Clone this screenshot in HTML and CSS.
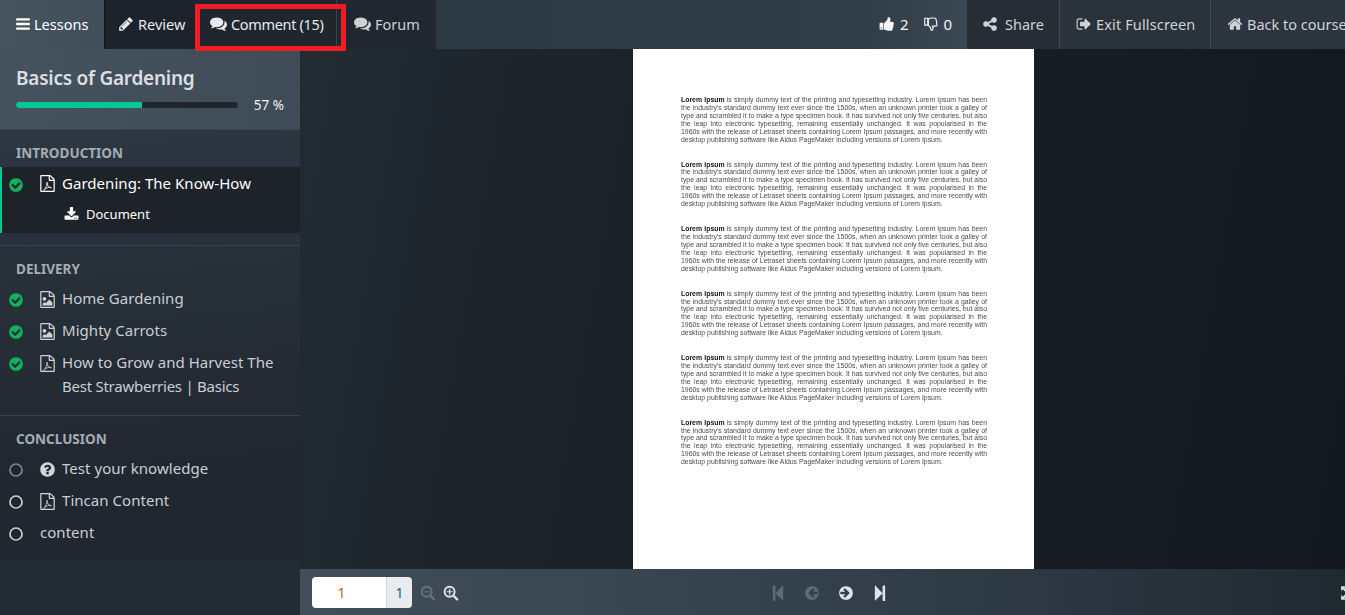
FILE: index.html
```html
<!DOCTYPE html>
<html lang="en">
<head>
<meta charset="utf-8">
<title>Basics of Gardening</title>
<link rel="stylesheet" href="styles.css">
</head>
<body>
<svg class="sprite" xmlns="http://www.w3.org/2000/svg">
  <symbol id="i-bars" viewBox="0 0 1792 1792"><path d="M1664 1344v128q0 26-19 45t-45 19h-1408q-26 0-45-19t-19-45v-128q0-26 19-45t45-19h1408q26 0 45 19t19 45zm0-512v128q0 26-19 45t-45 19h-1408q-26 0-45-19t-19-45v-128q0-26 19-45t45-19h1408q26 0 45 19t19 45zm0-512v128q0 26-19 45t-45 19h-1408q-26 0-45-19t-19-45v-128q0-26 19-45t45-19h1408q26 0 45 19t19 45z"/></symbol>
  <symbol id="i-pencil" viewBox="0 0 1792 1792"><path d="M491 1536l91-91-235-235-91 91v107h128v128h107zm523-928q0-22-22-22-10 0-17 7l-542 542q-7 7-7 17 0 22 22 22 10 0 17-7l542-542q7-7 7-17zm-54-192l416 416-832 832h-416v-416zm683 96q0 53-37 90l-166 166-416-416 166-165q36-38 90-38 53 0 91 38l235 234q37 39 37 91z"/></symbol>
  <symbol id="i-comments" viewBox="0 0 1792 1792"><path d="M1408 768q0 139-94 257t-256.500 186.500-353.500 68.500q-86 0-176-16-124 88-278 128-36 9-86 16h-3q-11 0-20.500-8t-11.500-21q-1-3-1-6.500t.5-6.500 2-6l2.500-5 3.500-5.500 4-5 4.500-5 4-4.500q5-6 23-25t26-29.500 22.500-29 25-38.500 20.500-44q-124-72-195-177t-71-224q0-139 94-257t256.500-186.500 353.500-68.500 353.500 68.500 256.500 186.500 94 257zm384 256q0 120-71 224.500t-195 176.500q10 24 20.500 44t25 38.500 22.500 29 26 29.500 23 25q1 1 4 4.500t4.500 5 4 5 3.500 5.500l2.500 5 2 6 .5 6.500-1 6.500q-3 14-13 22t-22 7q-50-7-86-16-154-40-278-128-90 16-176 16-271 0-472-132 58 4 88 4 161 0 309-45t264-129q125-92 192-212t67-254q0-77-23-152 129 71 204 178t75 230z"/></symbol>
  <symbol id="i-thumb-up" viewBox="0 0 1792 1792"><path d="M320 1344q0-26-19-45t-45-19q-27 0-45.500 19t-18.500 45q0 27 18.500 45.500t45.500 18.500q26 0 45-18.500t19-45.500zm160-512v640q0 26-19 45t-45 19h-288q-26 0-45-19t-19-45v-640q0-26 19-45t45-19h288q26 0 45 19t19 45zm1184 0q0 86-55 149 15 44 15 76 3 76-43 137 17 56 0 117-15 57-54 94 9 112-49 181-64 76-197 78h-129q-66 0-144-15.500t-121.500-29-120.500-39.500q-123-43-158-44-26-1-45-19.500t-19-44.500v-641q0-25 18-43.500t43-20.500q24-2 76-59t101-121q68-87 101-120 18-18 31-48t17.500-48.500 13.500-60.500q7-39 12.500-61t19.500-52 34-50q19-19 45-19 46 0 82.500 10.500t60 26 40 40.500 24 45 12 50 5 45 .5 39q0 38-9.500 76t-19 60-27.500 56q-3 6-10 18t-11 22-8 24h277q78 0 135 57t57 135z"/></symbol>
  <symbol id="i-thumb-down" viewBox="0 0 1792 1792"><g transform="matrix(1 0 0 -1 0 1792)" fill="none" stroke="currentColor" stroke-width="128" stroke-linejoin="round"><path d="M600 832v640q70 10 200 60 110 40 230 40h220q120 0 170-60 45-55 40-150 40-45 50-100 10-50-5-100 35-55 30-125-2-40-15-70 50-60 50-135 0-80-55-130t-125-50h-340q25-60 50-115 25-70 25-130 0-100-50-155-40-40-120-40-30 0-50 30-15 25-25 85-15 90-60 170-50 75-130 165-50 50-90 70z"/><path d="M190 770h340v770h-340z"/></g></symbol>
  <symbol id="i-share" viewBox="0 0 1792 1792"><path d="M1344 1024q133 0 226.500 93.500t93.500 226.500-93.500 226.500-226.500 93.500-226.500-93.500-93.500-226.500q0-12 2-34l-360-180q-92 86-218 86-133 0-226.500-93.500t-93.500-226.500 93.500-226.500 226.500-93.500q126 0 218 86l360-180q-2-22-2-34 0-133 93.500-226.500t226.500-93.500 226.500 93.500 93.500 226.500-93.500 226.500-226.500 93.500q-126 0-218-86l-360 180q2 22 2 34t-2 34l360 180q92-86 218-86z"/></symbol>
  <symbol id="i-exit" viewBox="0 0 1792 1792"><path d="M704 1440q0 4 1 20t.5 26.500-3 23.500-10 19.500-20.500 6.500h-320q-119 0-203.500-84.500t-84.500-203.500v-704q0-119 84.500-203.500t203.500-84.500h320q13 0 22.500 9.500t9.500 22.500q0 4 1 20t.5 26.500-3 23.500-10 19.500-20.500 6.500h-320q-66 0-113 47t-47 113v704q0 66 47 113t113 47h312l11.500 1 11.500 3 8 5.500 7 9 2 13.500zm928-544q0 26-19 45l-544 544q-19 19-45 19t-45-19-19-45v-288h-448q-26 0-45-19t-19-45v-384q0-26 19-45t45-19h448v-288q0-26 19-45t45-19 45 19l544 544q19 19 19 45z"/></symbol>
  <symbol id="i-home" viewBox="0 0 1792 1792"><path d="M1472 992v480q0 26-19 45t-45 19h-384v-384h-256v384h-384q-26 0-45-19t-19-45v-480q0-1 .5-3t.5-3l575-474 575 474q1 2 1 6zm223-69l-62 74q-8 9-21 11h-3q-13 0-21-7l-692-577-692 577q-12 8-24 7-13-2-21-11l-62-74q-8-10-7-23.500t11-21.500l719-599q32-26 76-26t76 26l244 204v-195q0-14 9-23t23-9h192q14 0 23 9t9 23v408l219 182q10 8 11 21.500t-7 23.500z"/></symbol>
  <symbol id="i-check" viewBox="0 0 1792 1792"><path d="M1412 734q0-28-18-46l-91-90q-19-19-45-19t-45 19l-408 407-226-226q-19-19-45-19t-45 19l-91 90q-18 18-18 46 0 27 18 45l362 362q19 19 45 19 27 0 46-19l543-543q18-18 18-45zm252 162q0 209-103 385.500t-279.500 279.500-385.500 103-385.500-103-279.500-279.500-103-385.500 103-385.500 279.500-279.500 385.500-103 385.500 103 279.500 279.500 103 385.500z"/></symbol>
  <symbol id="i-circle" viewBox="0 0 1792 1792"><circle cx="896" cy="896" r="672" fill="none" stroke="currentColor" stroke-width="190"/></symbol>
  <symbol id="i-question" viewBox="0 0 1792 1792"><path d="M1024 1376v-192q0-14-9-23t-23-9h-192q-14 0-23 9t-9 23v192q0 14 9 23t23 9h192q14 0 23-9t9-23zm256-672q0-88-55.500-163t-138.500-116-170-41q-243 0-371 213-15 24 8 42l132 100q7 6 19 6 16 0 25-12 53-68 86-92 34-24 86-24 48 0 85.500 26t37.500 59q0 38-20 61t-68 45q-63 28-115.500 86.500t-52.500 125.500v36q0 14 9 23t23 9h192q14 0 23-9t9-23q0-19 21.500-49.500t54.500-49.500q32-18 49-28.500t46-35 44.500-48 28-60.500 12.500-81zm384 192q0 209-103 385.500t-279.500 279.500-385.500 103-385.500-103-279.500-279.500-103-385.500 103-385.500 279.500-279.500 385.500-103 385.500 103 279.500 279.500 103 385.500z"/></symbol>
  <symbol id="i-download" viewBox="0 0 1792 1792"><path d="M1344 1344q0-26-19-45t-45-19-45 19-19 45 19 45 45 19 45-19 19-45zm256 0q0-26-19-45t-45-19-45 19-19 45 19 45 45 19 45-19 19-45zm128-224v320q0 40-28 68t-68 28h-1472q-40 0-68-28t-28-68v-320q0-40 28-68t68-28h465l135 136q58 56 136 56t136-56l136-136h464q40 0 68 28t28 68zm-325-569q17 41-14 70l-448 448q-18 19-45 19t-45-19l-448-448q-31-29-14-70 17-39 59-39h256v-448q0-26 19-45t45-19h256q26 0 45 19t19 45v448h256q42 0 59 39z"/></symbol>
  <symbol id="i-pdf" viewBox="0 0 1792 1792"><path d="M1596 380q28 28 48 76t20 88v1152q0 40-28 68t-68 28h-1344q-40 0-68-28t-28-68v-1600q0-40 28-68t68-28h896q40 0 88 20t76 48zm-444-244v376h376q-10-29-22-41l-313-313q-12-12-41-22zm384 1528v-1024h-416q-40 0-68-28t-28-68v-416h-768v1536h1280z"/><path fill="none" stroke="currentColor" stroke-width="90" stroke-linejoin="round" d="M860 760q-30 130 40 300 70 150 190 240 130 60 220 40-20-50-130-50-170 0-380 90-170 80-290 260-40-10 30-90 120-110 230-350 60-170 90-440z"/></symbol>
  <symbol id="i-image" viewBox="0 0 1792 1792"><path d="M1596 380q28 28 48 76t20 88v1152q0 40-28 68t-68 28h-1344q-40 0-68-28t-28-68v-1600q0-40 28-68t68-28h896q40 0 88 20t76 48zm-444-244v376h376q-10-29-22-41l-313-313q-12-12-41-22zm384 1528v-1024h-416q-40 0-68-28t-28-68v-416h-768v1536h1280zm-128-448v320h-1024v-192l192-192 128 128 384-384zm-832-192q-80 0-136-56t-56-136 56-136 136-56 136 56 56 136-56 136-136 56z"/></symbol>
  <symbol id="i-zoom-in" viewBox="0 0 1792 1792"><circle cx="740" cy="760" r="560" fill="none" stroke="currentColor" stroke-width="220"/><path fill="none" stroke="currentColor" stroke-width="260" stroke-linecap="round" d="M1180 1210l400 400"/><path fill="none" stroke="currentColor" stroke-width="130" d="M420 760h640M740 440v640"/></symbol>
  <symbol id="i-zoom-out" viewBox="0 0 1792 1792"><circle cx="740" cy="760" r="560" fill="none" stroke="currentColor" stroke-width="220"/><path fill="none" stroke="currentColor" stroke-width="260" stroke-linecap="round" d="M1180 1210l400 400"/><path fill="none" stroke="currentColor" stroke-width="130" d="M420 760h640"/></symbol>
  <symbol id="i-first" viewBox="0 0 1792 1792"><path d="M1363 141q19-19 32-13t13 32v1472q0 26-13 32t-32-13l-710-710q-9-9-13-19v710q0 26-19 45t-45 19h-128q-26 0-45-19t-19-45v-1408q0-26 19-45t45-19h128q26 0 45 19t19 45v710q4-10 13-19z"/></symbol>
  <symbol id="i-last" viewBox="0 0 1792 1792"><path transform="matrix(-1 0 0 1 1792 0)" d="M1363 141q19-19 32-13t13 32v1472q0 26-13 32t-32-13l-710-710q-9-9-13-19v710q0 26-19 45t-45 19h-128q-26 0-45-19t-19-45v-1408q0-26 19-45t45-19h128q26 0 45 19t19 45v710q4-10 13-19z"/></symbol>
  <symbol id="i-next" viewBox="0 0 1792 1792"><path fill-rule="evenodd" d="M1664 896q0 209-103 385.500t-279.500 279.500-385.500 103-385.500-103-279.500-279.500-103-385.500 103-385.500 279.500-279.500 385.500-103 385.500 103 279.500 279.500 103 385.500zM1285 896q0-27-18-45l-91-91-362-362q-18-18-45-18t-45 18l-91 91q-18 18-18 45t18 45l189 189h-502q-26 0-45 19t-19 45v128q0 26 19 45t45 19h502l-189 189q-19 19-19 45t19 45l91 91q18 18 45 18t45-18l362-362 91-91q18-18 18-45z"/></symbol>
  <symbol id="i-prev" viewBox="0 0 1792 1792"><path transform="matrix(-1 0 0 1 1792 0)" fill-rule="evenodd" d="M1664 896q0 209-103 385.500t-279.500 279.500-385.500 103-385.500-103-279.500-279.500-103-385.500 103-385.500 279.500-279.500 385.500-103 385.500 103 279.500 279.500 103 385.500zM1285 896q0-27-18-45l-91-91-362-362q-18-18-45-18t-45 18l-91 91q-18 18-18 45t18 45l189 189h-502q-26 0-45 19t-19 45v128q0 26 19 45t45 19h502l-189 189q-19 19-19 45t19 45l91 91q18 18 45 18t45-18l362-362 91-91q18-18 18-45z"/></symbol>
  <symbol id="i-expand" viewBox="0 0 1792 1792"><path d="M128 128h560l-200 200 320 320-160 160-320-320-200 200zM128 1664h560l-200-200 320-320-160-160-320 320-200-200zM1664 128h-560l200 200-320 320 160 160 320-320 200 200zM1664 1664h-560l200-200-320-320 160-160 320 320 200-200z"/></symbol>
</svg>

<header class="topbar">
  <a class="tab tab-lessons"><svg class="ico"><use href="#i-bars"/></svg>Lessons</a>
  <a class="tab tab-dark tab-review"><svg class="ico"><use href="#i-pencil"/></svg>Review</a>
  <a class="tab tab-dark tab-comment"><svg class="ico ico-wide"><use href="#i-comments"/></svg>Comment (15)</a>
  <a class="tab tab-dark tab-forum"><svg class="ico ico-wide"><use href="#i-comments"/></svg>Forum</a>
  <div class="topbar-spacer"></div>
  <div class="votes">
    <span class="vote"><svg class="ico"><use href="#i-thumb-up"/></svg>2</span>
    <span class="vote"><svg class="ico"><use href="#i-thumb-down"/></svg>0</span>
  </div>
  <a class="tab tab-right tab-share"><svg class="ico"><use href="#i-share"/></svg>Share</a>
  <a class="tab tab-right tab-exit"><svg class="ico"><use href="#i-exit"/></svg>Exit Fullscreen</a>
  <a class="tab tab-right tab-back"><svg class="ico"><use href="#i-home"/></svg>Back to course</a>
</header>
<div class="highlight-box"></div>

<div class="layout">
  <aside class="sidebar">
    <div class="course">
      <h1 class="course-title">Basics of Gardening</h1>
      <div class="progress-row">
        <div class="progress"><div class="progress-fill" style="width:57%"></div></div>
        <span class="progress-label">57 %</span>
      </div>
    </div>

    <section class="section">
      <h2 class="section-title">INTRODUCTION</h2>
      <div class="active-item">
        <div class="row row-active">
          <svg class="status done"><use href="#i-check"/></svg>
          <svg class="type"><use href="#i-pdf"/></svg>
          <span class="row-text">Gardening: The Know-How</span>
        </div>
        <div class="sub-row"><svg class="sub-ico"><use href="#i-download"/></svg>Document</div>
      </div>
    </section>

    <section class="section">
      <h2 class="section-title">DELIVERY</h2>
      <div class="row"><svg class="status done"><use href="#i-check"/></svg><svg class="type"><use href="#i-image"/></svg><span class="row-text">Home Gardening</span></div>
      <div class="row"><svg class="status done"><use href="#i-check"/></svg><svg class="type"><use href="#i-image"/></svg><span class="row-text">Mighty Carrots</span></div>
      <div class="row"><svg class="status done"><use href="#i-check"/></svg><svg class="type"><use href="#i-pdf"/></svg><span class="row-text">How to Grow and Harvest The <span class="tight">Best Strawberries | Basics</span></span></div>
    </section>

    <section class="section section-last">
      <h2 class="section-title">CONCLUSION</h2>
      <div class="row"><svg class="status dim"><use href="#i-circle"/></svg><svg class="type"><use href="#i-question"/></svg><span class="row-text">Test your knowledge</span></div>
      <div class="row"><svg class="status"><use href="#i-circle"/></svg><svg class="type"><use href="#i-pdf"/></svg><span class="row-text">Tincan Content</span></div>
      <div class="row"><svg class="status"><use href="#i-circle"/></svg><span class="row-text">content</span></div>
    </section>
    <div class="sidebar-foot"></div>
  </aside>

  <main class="viewer">
    <div class="stage">
      <article class="page">
        <p class="para"><span class="ln"><b>Lorem Ipsum</b> is simply dummy text of the printing and typesetting industry. Lorem Ipsum has been</span><span class="ln">the industry's standard dummy text ever since the 1500s, when an unknown printer took a galley of</span><span class="ln">type and scrambled it to make a type specimen book. It has survived not only five centuries, but also</span><span class="ln">the leap into electronic typesetting, remaining essentially unchanged. It was popularised in the</span><span class="ln">1960s with the release of Letraset sheets containing Lorem Ipsum passages, and more recently with</span><span class="ln ln-end">desktop publishing software like Aldus PageMaker including versions of Lorem Ipsum.</span></p>
        <p class="para"><span class="ln"><b>Lorem Ipsum</b> is simply dummy text of the printing and typesetting industry. Lorem Ipsum has been</span><span class="ln">the industry's standard dummy text ever since the 1500s, when an unknown printer took a galley of</span><span class="ln">type and scrambled it to make a type specimen book. It has survived not only five centuries, but also</span><span class="ln">the leap into electronic typesetting, remaining essentially unchanged. It was popularised in the</span><span class="ln">1960s with the release of Letraset sheets containing Lorem Ipsum passages, and more recently with</span><span class="ln ln-end">desktop publishing software like Aldus PageMaker including versions of Lorem Ipsum.</span></p>
        <p class="para"><span class="ln"><b>Lorem Ipsum</b> is simply dummy text of the printing and typesetting industry. Lorem Ipsum has been</span><span class="ln">the industry's standard dummy text ever since the 1500s, when an unknown printer took a galley of</span><span class="ln">type and scrambled it to make a type specimen book. It has survived not only five centuries, but also</span><span class="ln">the leap into electronic typesetting, remaining essentially unchanged. It was popularised in the</span><span class="ln">1960s with the release of Letraset sheets containing Lorem Ipsum passages, and more recently with</span><span class="ln ln-end">desktop publishing software like Aldus PageMaker including versions of Lorem Ipsum.</span></p>
        <p class="para"><span class="ln"><b>Lorem Ipsum</b> is simply dummy text of the printing and typesetting industry. Lorem Ipsum has been</span><span class="ln">the industry's standard dummy text ever since the 1500s, when an unknown printer took a galley of</span><span class="ln">type and scrambled it to make a type specimen book. It has survived not only five centuries, but also</span><span class="ln">the leap into electronic typesetting, remaining essentially unchanged. It was popularised in the</span><span class="ln">1960s with the release of Letraset sheets containing Lorem Ipsum passages, and more recently with</span><span class="ln ln-end">desktop publishing software like Aldus PageMaker including versions of Lorem Ipsum.</span></p>
        <p class="para"><span class="ln"><b>Lorem Ipsum</b> is simply dummy text of the printing and typesetting industry. Lorem Ipsum has been</span><span class="ln">the industry's standard dummy text ever since the 1500s, when an unknown printer took a galley of</span><span class="ln">type and scrambled it to make a type specimen book. It has survived not only five centuries, but also</span><span class="ln">the leap into electronic typesetting, remaining essentially unchanged. It was popularised in the</span><span class="ln">1960s with the release of Letraset sheets containing Lorem Ipsum passages, and more recently with</span><span class="ln ln-end">desktop publishing software like Aldus PageMaker including versions of Lorem Ipsum.</span></p>
        <p class="para"><span class="ln"><b>Lorem Ipsum</b> is simply dummy text of the printing and typesetting industry. Lorem Ipsum has been</span><span class="ln">the industry's standard dummy text ever since the 1500s, when an unknown printer took a galley of</span><span class="ln">type and scrambled it to make a type specimen book. It has survived not only five centuries, but also</span><span class="ln">the leap into electronic typesetting, remaining essentially unchanged. It was popularised in the</span><span class="ln">1960s with the release of Letraset sheets containing Lorem Ipsum passages, and more recently with</span><span class="ln ln-end">desktop publishing software like Aldus PageMaker including versions of Lorem Ipsum.</span></p>
      </article>
    </div>
    <footer class="toolbar">
      <div class="pager">
        <span class="pager-input">1</span><span class="pager-total">1</span>
      </div>
      <svg class="tool tool-zoomout"><use href="#i-zoom-out"/></svg>
      <svg class="tool tool-zoomin"><use href="#i-zoom-in"/></svg>
      <div class="nav">
        <svg class="tool-nav tool-step off"><use href="#i-first"/></svg>
        <svg class="tool-nav off"><use href="#i-prev"/></svg>
        <svg class="tool-nav"><use href="#i-next"/></svg>
        <svg class="tool-nav tool-step"><use href="#i-last"/></svg>
      </div>
      <svg class="tool tool-expand"><use href="#i-expand"/></svg>
    </footer>
  </main>
</div>
</body>
</html>
```
FILE: styles.css
```css
* { box-sizing: border-box; }
html, body { height: 100%; }
body {
  margin: 0;
  height: 100vh;
  overflow: hidden;
  display: flex;
  flex-direction: column;
  font-family: "Noto Sans", sans-serif;
  font-size: 14px;
  color: #fff;
  background: #1c2329;
}
.sprite { display: none; }
svg { fill: currentColor; flex: none; display: block; }

.topbar {
  flex: 0 0 49px;
  display: flex;
  align-items: stretch;
  white-space: nowrap;
  overflow: hidden;
  background: linear-gradient(90deg, #46545f 0, #3c4a55 200px, #2e3a43 440px, #303c46 860px, #3b4854 967px);
}
.tab {
  display: flex;
  align-items: center;
  gap: 4px;
  padding-bottom: 2px;
  font-size: 14.5px;
  color: #e8eaec;
  flex: none;
}
.ico { width: 16px; height: 16px; }
.ico-wide { width: 17px; height: 17px; }
.tab-lessons { width: 104px; padding-left: 15px; gap: 3px; color: #fff; }
.tab-dark { background: #1d232b; }
.tab-review { width: 93px; padding-left: 13px; border-left: 1px solid #14181d; }
.tab-comment { width: 140px; padding-left: 13px; letter-spacing: -.33px; background: #1f262e; border-right: 1px solid #39434c; }
.tab-forum { width: 99px; padding-left: 17px; color: #ccd1d6; background: #202730; }
.topbar-spacer { flex: 0 0 428px; }
.votes { flex: 0 0 103px; display: flex; align-items: center; gap: 14px; padding: 0 0 2px 15px; font-size: 15px; color: #f2f4f6; }
.vote { display: flex; align-items: center; gap: 5px; }
.tab-right { background: #272e36; color: #ced3d7; padding-left: 16px; }
.tab-share { width: 93px; gap: 7px; padding-left: 15px; border-right: 1px solid #3e4852; background: #262d35; }
.tab-exit { width: 151px; letter-spacing: .14px; border-right: 1px solid #434d57; background: #2a323a; }
.tab-back { width: 200px; background: #2c353e; }

.highlight-box {
  position: absolute;
  left: 195px;
  top: 4px;
  width: 151px;
  height: 47px;
  border: 5px solid #ee1c25;
}

.layout { flex: 1; display: flex; min-height: 0; }

.sidebar {
  flex: 0 0 300px;
  display: flex;
  flex-direction: column;
  background: linear-gradient(175deg, #323d48 0, #2b343f 130px, #20272f 430px);
}
.course {
  height: 81px;
  padding: 16px 16px 0;
  background: linear-gradient(100deg, #45535f, #3f4c58);
  border-bottom: 1px solid #39444f;
}
.course-title { margin: 0; font-size: 19px; letter-spacing: -.25px; line-height: 26px; font-weight: 600; color: #dcdfe2; }
.progress-row { display: flex; align-items: center; margin-top: 6px; height: 15px; }
.progress { width: 222px; height: 6px; background: #1e252c; border-radius: 3px; overflow: hidden; }
.progress-fill { height: 100%; background: #00c896; }
.progress-label { margin-left: 16px; font-size: 13.5px; color: #f2f3f4; }

.section { padding-bottom: 12px; border-bottom: 1px solid #38424c; }
.section-last { border-bottom: 0; }
.section-title {
  margin: 0;
  padding: 13px 16px 4px;
  font-size: 13.5px;
  line-height: 20px;
  font-weight: 700;
  color: #a4acb4;
}
.row {
  display: flex;
  align-items: flex-start;
  padding: 3px 16px 5px 8px;
  font-size: 15px;
  letter-spacing: .04px;
  line-height: 24px;
  color: #c9cfd5;
}
.row-active { padding-top: 4px; padding-bottom: 6px; padding-left: 6px; color: #fff; }
.active-item { height: 66px; background: #1e2229; border-left: 2px solid #00c896; }
.status { width: 16px; height: 16px; margin-top: 6px; margin-right: 16px; color: #c9cfd5; }
.status.done { color: #10b35a; }
.status.dim { color: #80878e; }
.type { width: 17px; height: 17px; margin-top: 5px; margin-left: -1px; margin-right: 6px; color: #cfd5da; }
.row-active .type { margin-top: 4px; color: #fff; }
.tight { letter-spacing: -.25px; }
.sub-row {
  display: flex;
  align-items: center;
  gap: 7px;
  height: 24px;
  margin-top: 1px;
  padding-left: 62px;
  font-size: 13px;
  color: #fff;
}
.sub-ico { width: 15px; height: 15px; }
.sidebar-foot { flex: 1; background: #232c34; }

.viewer { flex: 1; min-width: 0; display: flex; flex-direction: column; }
.stage {
  flex: 1;
  display: flex;
  padding-left: 333px;
  background: linear-gradient(100deg, #212b31 0, #1a2127 35%, #13181d 100%);
}
.page {
  width: 401px;
  height: 520px;
  padding: 47px 47px 0 48px;
  background: #fff;
  font-family: "Liberation Sans", Arial, sans-serif;
  font-size: 6.9px;
  color: #4a4a4a;
}
.para { margin: 0 0 17.1px; line-height: 7.9px; filter: blur(.25px); }
.para b { color: #111; }
.ln { display: block; text-align: justify; text-align-last: justify; white-space: normal; }
.ln-end { text-align-last: left; }

.toolbar {
  flex: 0 0 46px;
  display: flex;
  align-items: center;
  padding-left: 12px;
  overflow: hidden;
  background: linear-gradient(90deg, #414e5a 0, #36434e 450px, #2a353f 800px, #1e2930 1045px);
}
.pager { display: flex; width: 100px; height: 31px; border-radius: 4px; overflow: hidden; font-size: 14px; line-height: 31px; text-align: center; flex: none; }
.pager-input { width: 75px; padding-right: 15px; background: #fff; color: #c06a00; border-right: 1px solid #ced4da; }
.pager-total { width: 25px; background: #e9ecef; color: #26588c; }
.tool { width: 16px; height: 16px; margin-top: 2px; }
.tool-zoomout { margin-left: 8px; color: #66727c; }
.tool-zoomin { margin-left: 7px; color: #dfe5ea; }
.nav { display: flex; align-items: center; gap: 18px; margin: 2px 0 0 311px; }
.tool-nav { width: 16px; height: 16px; color: #dfe4e8; }
.tool-step { width: 18px; height: 18px; margin: 0 -1px; }
.tool-nav.off { color: #5e6a74; }
.tool-expand { margin-left: auto; margin-right: -11px; color: #dfe4e8; }
```
